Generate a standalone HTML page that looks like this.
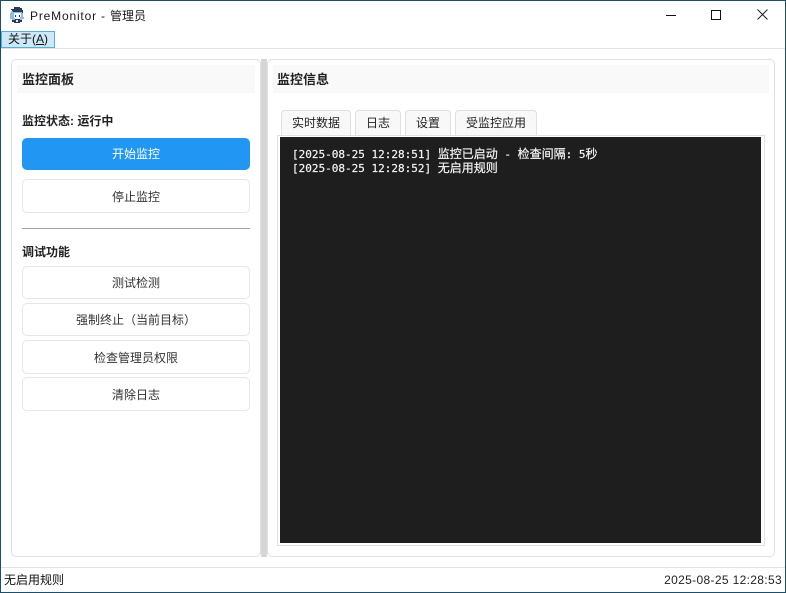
<!DOCTYPE html>
<html lang="zh"><head><meta charset="utf-8"><title>PreMonitor - 管理员</title>
<style>
*{box-sizing:border-box;margin:0;padding:0}
html,body{width:786px;height:593px;overflow:hidden;background:#fff}
body{position:relative;font-family:"Liberation Sans","Noto Sans CJK SC",sans-serif;font-size:12px;color:#222}
.a{position:absolute;white-space:nowrap}
.panel{position:absolute;border:1px solid #e0e0e0;border-radius:5px;background:#fff}
.hd{position:absolute;background:#f9f9f9;height:28px;top:65px}
.t{position:absolute;font-weight:bold;font-size:13px;line-height:18px;color:#222;white-space:nowrap}
.btn{position:absolute;left:22px;width:228px;border:1px solid #e6e6e6;border-radius:5px;background:#fff;text-align:center;font-size:12px;color:#333}
.tab{position:absolute;top:110px;height:26px;border:1px solid #e0e0e0;border-bottom:none;border-radius:4px 4px 0 0;background:#f8f8f8;text-align:center;line-height:25px;font-size:12px;color:#222}
.log{position:absolute;left:292px;height:14px;line-height:14px;color:#f4f4f4;font-size:12px;white-space:nowrap;font-family:"DejaVu Sans Mono","Noto Sans CJK SC",monospace;-webkit-text-stroke:.2px #f4f4f4}
.log b{font-weight:normal;font-size:11px}
</style></head><body>
<div class="a" style="left:0;top:0;width:786px;height:1px;background:#1d4f6b"></div>
<div class="a" style="left:0;top:0;width:1px;height:593px;background:#1d4f6b"></div>
<div class="a" style="right:0;top:0;width:1px;height:593px;background:#1d4f6b"></div>
<div class="a" style="left:0;bottom:0;width:786px;height:1px;background:#1d4f6b"></div>

<svg class="a" style="left:9px;top:7px" width="16" height="16" viewBox="0 0 16 16">
<path fill="#2b3a55" d="M5 0h6v1h2v2h1v3H3V3h-1V2h3z"/>
<path fill="#8dbde6" d="M2 4h2v1h9v1h1v4h1v2h-2v1H3v-1H1V6h1z"/>
<path fill="#f2f8fd" d="M5 6h7v4h-1v2H6v-1H5z"/>
<path fill="#2b3a55" d="M6 8h1v2H6zM10 8h1v2h-1z"/>
<path fill="#2b3a55" d="M3 13h3v-1h5v1h2v2h-2v1H5v-1H3z"/>
<path fill="#dfeaf5" d="M7 13h2v2H7z"/>
</svg>
<div class="a" style="left:30px;top:7px;line-height:18px;font-size:12px;color:#1a1a1a"><span style="letter-spacing:.82px">PreMonitor - </span>管理员</div>

<svg class="a" style="left:666px;top:9px" width="12" height="12" viewBox="0 0 12 12"><path d="M0 6.5h10" stroke="#111" fill="none"/></svg>
<svg class="a" style="left:711px;top:10px" width="11" height="11" viewBox="0 0 11 11"><rect x=".5" y=".5" width="9" height="9" stroke="#111" fill="none"/></svg>
<svg class="a" style="left:757px;top:9px" width="12" height="12" viewBox="0 0 12 12"><path d="M.5 .5L10.5 10.5M10.5 .5L.5 10.5" stroke="#222" fill="none"/></svg>

<div class="a" style="left:1px;top:31px;width:54px;height:17px;background:#cde8f6;border:1px solid #58add4;line-height:15px;padding-left:6px;font-size:12px;color:#111">关于(<u>A</u>)</div>
<div class="a" style="left:1px;top:48px;width:784px;height:1px;background:#e2e2e2"></div>

<div class="panel" style="left:11px;top:59px;width:250px;height:498px"></div>
<div class="a" style="left:261px;top:59px;width:6px;height:498px;background:#d6d6d6"></div>
<div class="panel" style="left:267px;top:59px;width:508px;height:498px"></div>

<div class="hd" style="left:17px;width:238px"></div>
<div class="t" style="left:22px;top:71px">监控面板</div>
<div class="t" style="left:22px;top:112px;font-size:12px">监控状态: 运行中</div>
<div class="btn" style="top:138px;height:32px;background:#2196f3;border-color:#2196f3;color:#fff;line-height:30px">开始监控</div>
<div class="btn" style="top:179px;height:34px;line-height:34px">停止监控</div>
<div class="a" style="left:22px;top:228px;width:228px;height:1px;background:#a0a0a0"></div>
<div class="t" style="left:22px;top:243px;font-size:12px">调试功能</div>
<div class="btn" style="top:266px;height:33px;line-height:32px">测试检测</div>
<div class="btn" style="top:303px;height:33px;line-height:33px">强制终止（当前目标）</div>
<div class="btn" style="top:340px;height:34px;line-height:34px">检查管理员权限</div>
<div class="btn" style="top:377px;height:34px;line-height:34px">清除日志</div>

<div class="hd" style="left:273px;width:496px"></div>
<div class="t" style="left:277px;top:71px">监控信息</div>

<div class="tab" style="left:281px;width:70px">实时数据</div>
<div class="tab" style="left:355px;width:46px">日志</div>
<div class="tab" style="left:405px;width:46px">设置</div>
<div class="tab" style="left:455px;width:82px">受监控应用</div>
<div class="a" style="left:277px;top:135px;width:488px;height:411px;border:1px solid #e0e0e0;background:#fff"></div>
<div class="a" style="left:280px;top:137px;width:481px;height:406px;background:#1e1e1e"></div>
<div class="log" style="top:147px"><b>[2025-08-25 12:28:51] </b>监控已启动<b> - </b>检查间隔<b>: 5</b>秒</div>
<div class="log" style="top:161px"><b>[2025-08-25 12:28:52] </b>无启用规则</div>

<div class="a" style="left:1px;top:567px;width:784px;height:1px;background:#e2e2e2"></div>
<div class="a" style="left:4px;top:572px;line-height:17px;font-size:12px;color:#111">无启用规则</div>
<div class="a" style="right:4px;top:572px;line-height:17px;font-size:12px;letter-spacing:.34px;color:#222">2025-08-25 12:28:53</div>
</body></html>
